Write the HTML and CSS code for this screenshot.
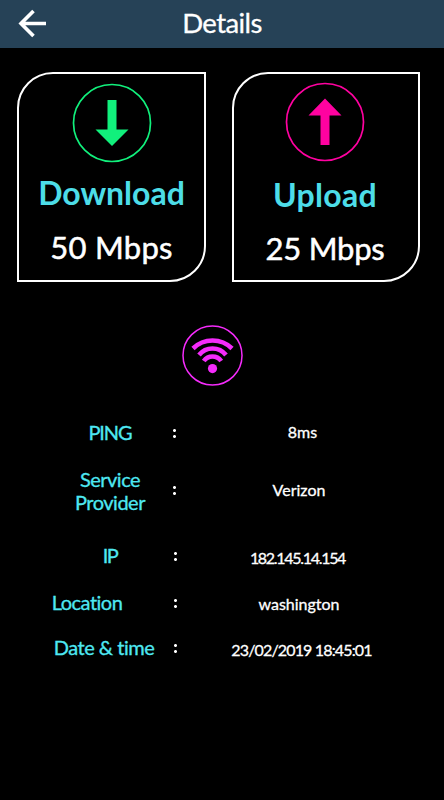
FILE: index.html
```html
<!DOCTYPE html>
<html lang="en">
<head>
    <meta charset="UTF-8">
    <meta name="viewport" content="width=device-width, initial-scale=1.0">
    <title>Details</title>
    <link rel="stylesheet" href="styles.css">
</head>
<body>
    <header class="topbar">
        <svg class="back" width="30" height="30" viewBox="0 0 30 30">
            <path d="M29 14.5H4M16.5 2L4 14.5L16.5 27"/>
        </svg>
        <h1 class="title">Details</h1>
    </header>

    <main>
        <div class="cards">
            <div class="card download">
                <svg class="arrow" width="80" height="80" viewBox="0 0 80 80">
                    <circle cx="40" cy="40" r="38.5"/>
                    <path d="M35.5 17H44.5V46.5H56.5L40 63L23.5 46.5H35.5Z"/>
                </svg>
                <h2>Download</h2>
                <p>50 Mbps</p>
            </div>
            <div class="card upload">
                <svg class="arrow" width="80" height="80" viewBox="0 0 80 80">
                    <circle cx="40" cy="40" r="38.5"/>
                    <path d="M40 16.5L56.5 33.5H44.5V63H35.5V33.5H23.5Z"/>
                </svg>
                <h2>Upload</h2>
                <p>25 Mbps</p>
            </div>
        </div>

        <svg class="wifi" width="62" height="62" viewBox="0 0 62 62">
            <circle class="ring" cx="31.5" cy="31.5" r="29.5"/>
            <path d="M12 24.5A27.8 27.8 0 0 1 51 24.5M18 31A17.3 17.3 0 0 1 45 31M22.8 37A10.7 10.7 0 0 1 40.2 37"/>
            <circle class="dot" cx="31.5" cy="44.6" r="4.6"/>
        </svg>

        <div class="info">
            <div class="row ping">
                <span class="label">PING</span><i class="colon"></i><span class="value">8ms</span>
            </div>
            <div class="row provider">
                <span class="label">Service<br>Provider</span><i class="colon"></i><span class="value">Verizon</span>
            </div>
            <div class="row ip">
                <span class="label">IP</span><i class="colon"></i><span class="value">182.145.14.154</span>
            </div>
            <div class="row location">
                <span class="label">Location</span><i class="colon"></i><span class="value">washington</span>
            </div>
            <div class="row date">
                <span class="label">Date &amp; time</span><i class="colon"></i><span class="value">23/02/2019 18:45:01</span>
            </div>
        </div>
    </main>
</body>
</html>
```
FILE: styles.css
```css
* {
    box-sizing: border-box;
}
body {
    margin: 0;
    height: 100vh;
    background-color: #000;
    color: #fff;
    font-family: Lato, "Open Sans", sans-serif;
    font-variant-ligatures: none;
    overflow: hidden;
}
h1, h2, p {
    margin: 0;
}

.topbar {
    display: grid;
    grid-template-columns: 48px 1fr 48px;
    align-items: center;
    height: 48px;
    background-color: #264257;
}
.back {
    margin-left: 17px;
    fill: none;
    stroke: #fff;
    stroke-width: 3.6;
}
.title {
    margin-top: -2px;
    font-size: 27.5px;
    font-weight: 400;
    line-height: 34px;
    letter-spacing: -0.6px;
    text-align: center;
    -webkit-text-stroke: 0.3px #fff;
}

.cards {
    display: flex;
    gap: 26px;
    padding: 24px 0 0 17px;
}
.card {
    display: flex;
    flex-direction: column;
    align-items: center;
    width: 189px;
    height: 210px;
    padding-top: 9px;
    border: 2px solid #fff;
    border-radius: 36px 0 36px 0;
}
.card h2 {
    margin-top: 10px;
    font-size: 32px;
    font-weight: 700;
    line-height: 40px;
    color: #4ddde8;
}
.card p {
    margin-top: 14px;
    font-size: 31px;
    line-height: 40px;
    letter-spacing: 0.3px;
    -webkit-text-stroke: 0.5px #fff;
}
.arrow circle {
    fill: none;
    stroke-width: 1.7;
}
.download .arrow {
    stroke: #11f07c;
}
.download .arrow path {
    fill: #11f07c;
    stroke: none;
}
.upload {
    width: 188px;
    padding-right: 2px;
}
.upload .arrow {
    margin-top: -1px;
    stroke: #ff02a0;
}
.upload .arrow path {
    fill: #ff02a0;
    stroke: none;
}
.upload h2 {
    margin-top: 13px;
    letter-spacing: 0.3px;
}
.upload p {
    margin-top: 13px;
    letter-spacing: -0.2px;
}

.wifi {
    display: block;
    margin: 42px 0 0 181px;
    fill: none;
    stroke: #f52bfb;
    stroke-width: 4.6;
}
.wifi .ring {
    stroke-width: 1.5;
}
.wifi .dot {
    fill: #f52bfb;
    stroke: none;
}

.info {
    padding-top: 35px;
}
.row {
    display: grid;
    grid-template-columns: 120px 10px 245px;
    align-items: center;
    padding-left: 50px;
    text-align: center;
    white-space: nowrap;
}
.label {
    font-size: 20px;
    line-height: 23px;
    letter-spacing: -0.5px;
    color: #4ee8f2;
    -webkit-text-stroke: 0.3px #4ee8f2;
}
.value {
    font-size: 16px;
    line-height: 20px;
    -webkit-text-stroke: 0.3px #fff;
}
/* two dots drawn as one colon */
.colon {
    width: 3px;
    height: 9px;
    margin: 2px 0 0 3px;
    background: radial-gradient(circle at 50% 50%, #fff 1.1px, transparent 1.8px) 0 0 / 3px 3px no-repeat,
                radial-gradient(circle at 50% 50%, #fff 1.1px, transparent 1.8px) 0 100% / 3px 3px no-repeat;
}
.ping .label {
    letter-spacing: -1.1px;
}
.ping .value {
    margin-top: -2px;
}
.provider {
    margin-top: 24px;
}
.provider .colon {
    margin-top: -2px;
}
.provider .value {
    margin: -2px 7px 0 0;
}
.ip {
    margin-top: 29px;
}
.ip .label {
    letter-spacing: -1.5px;
}
.ip .colon, .location .colon, .date .colon {
    margin-left: 4px;
}
.ip .value {
    margin: 5px 10px 0 0;
    letter-spacing: -1.3px;
}
.location {
    margin-top: 23px;
}
.location .label {
    margin-right: 46px;
}
.location .value {
    margin: 2px 7px 0 0;
}
.date {
    margin-top: 21px;
}
.date .label {
    margin-right: 12px;
}
.date .value {
    margin: 5px 2px 0 0;
    letter-spacing: -0.85px;
}
```
